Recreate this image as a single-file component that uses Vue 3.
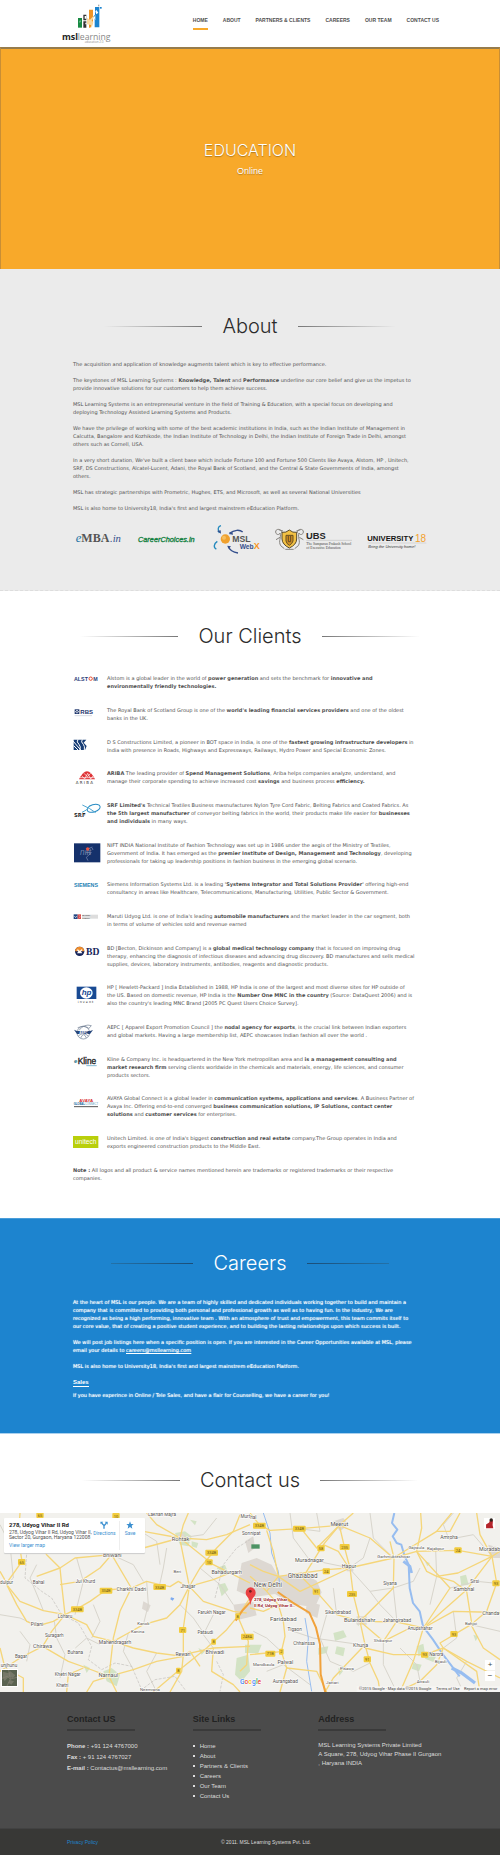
<script setup>
const navItems = ['HOME', 'ABOUT', 'PARTNERS & CLIENTS', 'CAREERS', 'OUR TEAM', 'CONTACT US']
const siteLinks = ['Home', 'About', 'Partners & Clients', 'Careers', 'Our Team', 'Contact Us']

// Text between double asterisks is emphasised.
const parts = (text) => text.split('**').map((t, i) => ({ t, strong: i % 2 === 1 }))

const about = [
  'The acquisition and application of knowledge augments talent which is key to effective performance.',
  'The keystones of MSL Learning Systems : **Knowledge, Talent** and **Performance** underline our core belief and give us the impetus to\nprovide innovative solutions for our customers to help them achieve success.',
  'MSL Learning Systems is an entrepreneurial venture in the field of Training & Education, with a special focus on developing and\ndeploying Technology Assisted Learning Systems and Products.',
  'We have the privilege of working with some of the best academic institutions in India, such as the Indian Institute of Management in\nCalcutta, Bangalore and Kozhikode, the Indian Institute of Technology in Delhi, the Indian Institute of Foreign Trade in Delhi, amongst\nothers such as Cornell, USA.',
  "In a very short duration, We've built a client base which include Fortune 100 and Fortune 500 Clients like Avaya, Alstom, HP , Unitech,\nSRF, DS Constructions, Alcatel-Lucent, Adani, the Royal Bank of Scotland, and the Central & State Governments of India, amongst\nothers.",
  'MSL has strategic partnerships with Prometric, Hughes, ETS, and Microsoft, as well as several National Universities',
  "MSL is also home to University18, India's first and largest mainstrem eEducation Platform.",
]

const clients = [
  { id: 'alstom', top: 45, text: 'Alstom is a global leader in the world of **power generation** and sets the benchmark for **innovative and\nenvironmentally friendly technologies.**' },
  { id: 'rbs', top: 140, text: "The Royal Bank of Scotland Group is one of the **world's leading financial services providers** and one of the oldest\nbanks in the UK." },
  { id: 'ds', top: 235, text: 'D S Constructions Limited, a pioneer in BOT space in India, is one of the **fastest growing infrastructure developers** in\nIndia with presence in Roads, Highways and Expressways, Railways, Hydro Power and Special Economic Zones.' },
  { id: 'ariba', top: 331, text: '**ARIBA** The leading provider of **Spend Management Solutions**, Ariba helps companies analyze, understand, and\nmanage their corporate spending to achieve increased cost **savings** and business process **efficiency.**' },
  { id: 'srf', top: 425, text: "**SRF Limited's** Technical Textiles Business masnufactures Nylon Tyre Cord Fabric, Belting Fabrics and Coated Fabrics. As\n**the 5th largest manufacturer** of conveyor belting fabrics in the world, their products make life easier for **businesses\nand individuals** in many ways." },
  { id: 'nift', top: 545, text: 'NIFT INDIA National Institute of Fashion Technology was set up in 1986 under the aegis of the Ministry of Textiles,\nGovernment of India. It has emerged as the **premier Institute of Design, Management and Technology**, developing\nprofessionals for taking up leadership positions in fashion business in the emerging global scenario.' },
  { id: 'siemens', top: 33, text: "Siemens Information Systems Ltd. is a leading **'Systems Integrator and Total Solutions Provider'** offering high-end\nconsultancy in areas like Healthcare, Telecommunications, Manufacturing, Utilities, Public Sector & Government." },
  { id: 'maruti', top: 129, text: "Maruti Udyog Ltd. is one of India's leading **automobile manufacturers** and the market leader in the car segment, both\nin terms of volume of vehicles sold and revenue earned" },
  { id: 'bd', top: 224, text: 'BD [Becton, Dickinson and Company] is a **global medical technology company** that is focused on improving drug\ntherapy, enhancing the diagnosis of infectious diseases and advancing drug discovery. BD manufactures and sells medical\nsupplies, devices, laboratory instruments, antibodies, reagents and diagnostic products.' },
  { id: 'hp', top: 343, text: "HP [ Hewlett-Packard ] India Established in 1988, HP India is one of the largest and most diverse sites for HP outside of\nthe US. Based on domestic revenue, HP India is the **Number One MNC in the country** (Source: DataQuest 2006) and is\nalso the country's leading MNC Brand [2005 PC Quest Users Choice Survey]." },
  { id: 'aepc', top: 462, text: 'AEPC [ Apparel Export Promotion Council ] the **nodal agency for exports**, is the crucial link between Indian exporters\nand global markets. Having a large membership list, AEPC showcases Indian fashion all over the world .' },
  { id: 'kline', top: 558, text: 'Kline & Company Inc. is headquartered in the New York metropolitan area and **is a management consulting and\nmarket research firm** serving clients worldwide in the chemicals and materials, energy, life sciences, and consumer\nproducts sectors.' },
  { id: 'avaya', top: 46, text: 'AVAYA Global Connect is a global leader in **communication systems, applications and services**. A Business Partner of\nAvaya Inc. Offering end-to-end converged **business communication solutions, IP Solutions, contact center\nsolutions** and **customer services** for enterprises.' },
  { id: 'unitech', top: 165, text: "Unitech Limited. is one of India's biggest **construction and real estate** company.The Group operates in India and\nexports engineered construction products to the Middle East." },
]

// Map labels: [text, centre x, baseline y, size]
const places = [
  ['Lakhan Majra', 486, 35, 14], ['Rohtak', 542, 109, 17], ['Bhiwani', 337, 156, 16], ['Beri', 532, 204, 13],
  ['Bahadurgarh', 680, 208, 16], ['dulpur', 20, 237, 14], ['Bahal', 116, 238, 14], ['Jui Khurd', 256, 236, 14],
  ['Charkhi Dadri', 394, 258, 15], ['Jhajjar', 564, 250, 15], ['Loharu', 195, 340, 14], ['Farukh Nagar', 635, 328, 14],
  ['Pilani', 111, 363, 15], ['Kanok', 430, 361, 13], ['Kanina', 413, 386, 13], ['Pataudi', 616, 389, 14],
  ['Suragarh', 163, 398, 14], ['Mahendragarh', 345, 417, 15], ['Chirawa', 128, 431, 16], ['Buhana', 226, 448, 14],
  ['Bagar', 63, 461, 14], ['Rewari', 549, 455, 15], ['Bhiwadi', 645, 447, 16], ['unjhunu', 27, 486, 14],
  ['Khetri Nagar', 203, 514, 14], ['Khetri', 187, 548, 14], ['Narnaul', 325, 518, 17], ['Neemrana', 450, 560, 13],
  ['Murt', 736, 41, 14], ['Son', 738, 92, 14], ['hal', 760, 42, 14], ['nipat', 766, 92, 14],
  ['Meerut', 1018, 65, 17], ['Muradnagar', 928, 171, 16], ['Hapur', 1047, 191, 16], ['Ghaziabad', 908, 220, 19],
  ['New Delhi', 804, 248, 19], ['Faridabad', 850, 349, 18], ['Tigaon', 884, 378, 14], ['Chhainssa', 912, 422, 14],
  ['Palwal', 856, 477, 16], ['Mandkaula', 791, 483, 13], ['Aurangabad', 856, 535, 14], ['Sikandrabad', 1014, 328, 14],
  ['Bulandshahr', 1079, 351, 17], ['Jahangirabad', 1191, 352, 14], ['Khurja', 1082, 427, 16], ['Shikarpur', 1149, 412, 13],
  ['Pisawa', 1041, 495, 13], ['Jattari', 997, 538, 13], ['Siyana', 1170, 240, 14], ['Garhmukteshwar', 1181, 161, 13],
  ['Gajraula', 1249, 133, 13], ['Rajabpur', 1307, 137, 13], ['Amroha', 1347, 104, 15], ['Moradab', 1469, 138, 16],
  ['Sirsi', 1424, 234, 14], ['Sambhal', 1392, 260, 16], ['Chanda', 1472, 330, 15], ['Bahjoi', 1413, 360, 13],
  ['Anupshahar', 1260, 376, 14], ['Narora', 1309, 454, 14], ['Bijauli', 1322, 476, 13], ['Atrauli', 1269, 534, 13],
]
const shields = [
  ['65', 120, 31], ['10', 348, 34], ['65', 65, 172], ['334B', 635, 144], ['10', 627, 173], ['334B', 318, 258],
  ['334B', 479, 247], ['334B', 232, 314], ['71', 548, 376], ['8', 641, 411], ['8', 535, 498], ['8', 713, 335],
  ['248A', 742, 396], ['334B', 778, 63], ['334B', 898, 72], ['58', 963, 131], ['235', 1034, 127], ['24', 979, 200],
  ['91', 949, 261], ['235', 1056, 268], ['91', 1102, 464], ['71B', 811, 447], ['2', 844, 441], ['24', 1374, 137],
  ['93', 1488, 236], ['93', 1362, 388], ['93', 1274, 450],
]
const roads = [
  'M0 200L20 235L66 170L55 100L60 25', 'M20 240L60 290L130 318L195 330L232 312L270 290L318 256L394 250L440 230L479 240L510 246L535 230L560 245',
  'M20 240L50 300L80 350L112 364L160 350L195 330L185 240L180 190L140 150L110 110', 'M195 330L155 380L128 425L60 460L15 490L0 500',
  'M0 430L15 490L70 520L70 562', 'M335 150L394 250L360 320L340 400L327 515', 'M110 215L180 190L225 160L335 150L430 130L540 100',
  'M335 150L300 190L240 230L180 240', 'M540 100L470 60L440 25', 'M540 100L550 60L565 25', 'M540 100L620 105L680 90L750 60', 'M430 80L540 100L640 180L700 210L750 235',
  'M540 105L555 180L568 245L550 370L550 450', 'M568 245L600 190L650 130L700 80L720 30', 'M568 245L640 225L690 205', 'M568 245L610 290L700 320L740 325',
  'M195 330L260 360L280 395L340 410L400 430L470 445L550 455', 'M340 410L385 385L430 360L500 340L540 300L568 245', 'M550 450L640 430L750 425', 'M550 450L545 500L510 562',
  'M327 515L400 495L470 470L550 455', 'M327 515L260 490L205 470L128 425', 'M327 515L350 562', 'M250 490L205 510L200 562', 'M327 515L280 530L260 562',
  'M640 430L635 500L700 540L720 562', 'M750 280L713 335L680 375L620 430L535 498L460 562', 'M713 335L745 410L740 480L720 500', 'M600 485L570 440L550 455',
  'M1018 62L898 72L810 77L778 60L750 25', 'M1018 62L1034 130L1050 190L1060 270L1080 350L1095 420L1110 475L1135 530L1140 562', 'M1018 62L970 120L920 200L908 220', 'M1018 62L1110 100L1180 160L1250 140L1374 137L1476 155',
  'M1018 62L990 90L950 130L910 80', 'M1018 62L1060 25', 'M800 77L820 140L835 215L800 260L835 300L850 350L855 395L844 441L860 490L840 562', 'M835 215L980 195L1047 190L1180 160L1310 80L1355 25', 'M1047 190L1015 140L970 120',
  'M908 220L949 261L1010 330L1080 350L1191 352L1270 370L1400 255L1476 155L1500 140', 'M1080 350L1150 410L1230 370L1270 370L1360 320L1440 322L1500 325', 'M1080 350L1180 250L1182 160L1170 110',
  'M1150 410L1190 350', 'M1476 155L1490 235L1460 320L1413 360L1320 415L1330 430L1400 470L1500 520', 'M1250 140L1265 70L1262 25', 'M1250 140L1280 200L1310 215L1360 230L1400 260L1415 355', 'M1270 370L1240 470L1200 562',
  'M1095 430L1180 450L1274 450L1330 430', 'M1330 430L1310 480L1260 530L1190 562', 'M1330 430L1430 500L1440 562', 'M1413 360L1450 430L1500 465', 'M1250 140L1350 250L1290 340L1270 370', 'M1050 190L900 260L835 215',
  'M800 260L780 240L750 215', 'M835 215L790 200L750 180', 'M835 300L790 320L750 310', 'M844 441L800 445L750 450', 'M860 490L950 500L980 562', 'M1095 420L1000 520L975 562', 'M1310 215L1374 205L1476 155', 'M1476 155L1440 90L1430 25', 'M1380 25L1350 80L1310 80',
]
const lanes = [
  'M0 60L30 120L40 220L20 240', 'M110 180L90 220L115 280L130 318', 'M230 160L250 230L225 330', 'M335 150L400 180L430 230', 'M440 230L445 300L430 360', 'M500 130L490 190L479 240', 'M600 190L660 240L700 300',
  'M280 300L300 350L275 400', 'M60 380L90 420L80 470', 'M163 350L170 400L195 450L180 520', 'M226 430L260 400L300 420', 'M385 385L370 440L400 495', 'M470 445L440 500L470 562', 'M613 388L580 340L540 300', 'M640 330L610 390L640 430',
  'M0 330L60 340L111 363', 'M390 60L470 110L480 180', 'M650 40L610 90L540 100', 'M870 25L880 100L928 165', 'M928 165L1050 190', 'M1110 100L1090 160L1047 190L1110 260L1180 250', 'M1180 250L1240 230L1260 190', 'M980 330L960 400L990 470L1060 500L1110 475',
  'M880 380L940 400L1082 420', 'M1150 410L1150 480L1190 562', 'M1191 352L1180 250', 'M1347 104L1330 60L1360 25', 'M1307 137L1310 215L1290 300', 'M1350 250L1430 230L1490 236', 'M1360 320L1370 400L1330 430', 'M1413 360L1500 380', 'M1200 430L1250 480L1260 530',
  'M800 500L850 480L930 540', 'M760 380L800 400L844 441', 'M1347 104L1420 90L1476 155', 'M1000 250L1010 330', 'M950 25L960 80L898 72', 'M1110 25L1120 100L1180 160', 'M1400 470L1370 520L1390 562', 'M1110 260L1140 300L1191 352',
]
</script>

<template>
  <div class="page">
    <header class="header">
      <a href="#home" class="logo" aria-label="MSL Learning">
        <svg viewBox="180 10 156 123" width="52" height="41">
          <rect x="231" y="55" width="12" height="29" fill="#188a43" />
          <path d="M234 64l6-2v4l-5 4z" fill="#5fb583" />
          <path d="M247 45h9v17h-9zM247 65h9v19h-9z" fill="#333" />
          <path d="M251 49h5v8h-5zM253 69h4v5h-4z" fill="#fff" />
          <path d="M264 30h12v40l-8 14h-4z" fill="#f29423" />
          <path d="M258 55l9 5 10-11 6-2-11 16 5 4-5 18-2-9-12-2z" fill="#f8d8a0" />
          <path d="M282 22h13v61h-14V61l-3-11 4-5z" fill="#1d84cf" />
          <path d="M283 35l3-4 6 8-6 5zM278 54l5-8v16z" fill="#fff" />
          <rect x="291" y="15" width="4" height="5" fill="#aaa" /><rect x="297" y="22" width="5" height="5" fill="#1d84cf" />
          <text x="183" y="121" font-size="27" font-weight="700" fill="#242424">msl</text>
          <text x="230" y="121" font-size="26" fill="#888">learning</text>
          <text x="251" y="129" font-size="9" fill="#888">education 2.0</text>
        </svg>
      </a>
      <nav class="nav">
        <a v-for="(n, i) in navItems" :key="n" href="#" :class="{ active: i === 0 }">{{ n }}</a>
      </nav>
    </header>

    <section class="hero">
      <h1>EDUCATION</h1>
      <p>Online</p>
    </section>

    <section class="about">
      <h2 class="title"><span>About</span></h2>
      <p v-for="(a, i) in about" :key="i" class="copy">
        <template v-for="(s, j) in parts(a)" :key="j"><strong v-if="s.strong">{{ s.t }}</strong><template v-else>{{ s.t }}</template></template>
      </p>
      <div class="partners">
        <svg viewBox="75 70 141 96" width="47" height="32" class="serif">
          <text x="77" y="126" font-size="38" font-style="italic" fill="#2374a5">e</text>
          <text x="94" y="126" font-size="36" font-weight="700" fill="#555">MBA</text>
          <text x="180" y="127" font-size="32" font-style="italic" fill="#34508c">.in</text>
        </svg>
        <svg viewBox="255 70 180 96" width="60" height="32">
          <text x="258" y="127" font-size="22" font-style="italic" fill="#12803e" stroke="#12803e">CareerChoices.in</text>
        </svg>
        <svg viewBox="485 70 144 96" width="48" height="32">
          <g fill="none" stroke="#2489bd" stroke-width="4">
            <path d="M512 78c-9 2-11 10-5 22" /><path d="M577 97c-9-8-25-7-40 4" stroke="#344f8c" /><path d="M501 125c-11 7-12 20-3 23" /><path d="M533 140c4 10 15 18 30 20" stroke="#344f8c" />
          </g>
          <path d="M500 94l12 8-1-10zM535 103l11-7 2 9zM531 138l11 2-6 7z" fill="#344f8c" />
          <circle cx="525" cy="118" r="14" fill="#efa02e" /><circle cx="521" cy="114" r="6" fill="#f6bf60" />
          <text x="546" y="127" font-size="26" font-weight="700" fill="#555">MSL</text>
          <text x="568" y="147" font-size="20" font-weight="700" fill="#344f8c">Web</text>
          <text x="610" y="147" font-size="27" font-weight="700" fill="#f7941d">X</text>
        </svg>
        <svg viewBox="670 70 234 96" width="78" height="32">
          <g fill="none" stroke="#85827d" stroke-width="3">
            <path d="M694 100c-3-15-20-13-19-3s12 9 13 3c5 14-6 24 2 38l11 9" /><path d="M739 100c3-15 20-13 19-3s-12 9-13 3c-5 14 6 24-2 38l-11 9" />
            <path d="M697 94l-13-4M737 94l13-4M688 113l-12 7M746 113l12 7M704 149h25" />
          </g>
          <path d="M694 98q12 2 22-7 10 9 22 7v20q0 17-22 27-21-10-22-27z" fill="#f2c144" stroke="#594b2b" stroke-width="3" />
          <path d="M706 107h21v17q-2 8-11 13-8-4-10-13z" fill="#d28f22" stroke="#644e21" stroke-width="3" /><path d="M713 109v17h7v-17" fill="none" stroke="#684d21" stroke-width="3" />
          <text x="766" y="117" font-size="28" font-weight="700" fill="#242424">UBS</text>
          <path d="M767 122h137" stroke="#999" stroke-width="1" />
          <g class="serif" font-size="11" fill="#444"><text x="767" y="135">The Sampuran Prakash School</text><text x="767" y="148">of Executive Education</text></g>
        </svg>
        <svg viewBox="950 70 180 96" width="60" height="32">
          <text x="951" y="125" font-size="23" font-weight="700" fill="#151515">UNIVERSITY</text>
          <text x="1094" y="126" font-size="30" fill="#f3a12d">18</text>
          <path d="M952 130h176" stroke="#aaa" stroke-width="1" />
          <text x="954" y="145" font-size="12" font-style="italic" fill="#333">Bring the University home!</text>
        </svg>
      </div>
    </section>

    <section class="clients">
      <h2 class="title"><span>Our Clients</span></h2>
      <ul class="client-list">
        <li v-for="c in clients" :key="c.id" class="client">
          <svg :viewBox="`70 ${c.top} 84 48`" width="28" height="16" class="client-logo">
            <g v-if="c.id === 'alstom'" font-weight="700" font-size="16">
              <text x="73" y="65" fill="#293d78">ALST</text><circle cx="123" cy="59" r="5" fill="none" stroke="#e34a31" stroke-width="3" /><text x="131" y="65" fill="#293d78">M</text>
            </g>
            <g v-else-if="c.id === 'rbs'" fill="#1c346b">
              <rect x="75" y="150" width="14" height="14" /><path d="M80 152h4v3h3v4h-3v3h-4v-3h-3v-4h3z" fill="#fff" /><rect x="80" y="155" width="4" height="4" />
              <text x="92" y="164" font-size="18" font-weight="700">RBS</text><path d="M75 169h52" stroke="#8490a8" />
            </g>
            <g v-else-if="c.id === 'ds'">
              <path d="M72 240h38l-8 9 9 10-5 12H72z" fill="#173d76" /><path d="M70 244l24 28M85 239q-6 8 3 15 6 6 3 17M98 239q-6 8 3 15 5 6 3 17M72 258l14 14" fill="none" stroke="#fff" stroke-width="3" />
            </g>
            <g v-else-if="c.id === 'ariba'">
              <path d="M88 362q24-48 48 0z" fill="#df3337" /><path d="M96 351l9 10 9-17 9 17 8-10M103 344l10 10 10-10M91 357h42" fill="none" stroke="#fff" stroke-width="2" />
              <text x="78" y="377" font-size="12" fill="#333" class="wide">A R I B A</text>
            </g>
            <g v-else-if="c.id === 'srf'">
              <ellipse cx="132" cy="447" rx="20" ry="11" transform="rotate(-17 132 447)" fill="none" stroke="#268bc4" stroke-width="3" /><path d="M98 437q22 9 40 23M97 459q15-4 24-21" fill="none" stroke="#50a6d1" stroke-width="3" />
              <text x="73" y="473" font-size="16" font-weight="700" fill="#222" class="wide">SRF</text><path d="M73 467h46" stroke="#fff" />
            </g>
            <g v-else-if="c.id === 'nift'">
              <rect x="73" y="552" width="79" height="57" fill="#15316b" /><text x="91" y="586" font-size="25" font-style="italic" fill="#7185ab">nift</text>
              <path d="M112 570l16-7M108 579l17 1-15 14 5 10M127 565l3 7" fill="none" stroke="#8493b5" stroke-width="2" /><circle cx="114" cy="569" r="5" fill="#e95443" />
            </g>
            <text v-else-if="c.id === 'siemens'" x="73" y="54" font-size="16" font-weight="700" fill="#2381b3">SIEMENS</text>
            <g v-else-if="c.id === 'maruti'">
              <rect x="72" y="136" width="12" height="14" fill="#214682" /><path d="M74 141l4 5 4-5" stroke="#fff" stroke-width="2" fill="none" /><rect x="84" y="136" width="10" height="14" fill="#d84c4b" /><path d="M87 138l5 5-5 5" fill="none" stroke="#fff" />
              <rect x="97" y="137" width="48" height="12" fill="#ddd" /><g font-size="6" font-weight="700" fill="#555"><text x="98" y="142">MARUTI</text><text x="98" y="149">SUZUKI</text></g>
            </g>
            <g v-else-if="c.id === 'bd'">
              <circle cx="90" cy="246" r="14" fill="#17255b" /><path d="M76 246a14 14 0 0 1 28 0z" fill="#ef8d2c" /><path d="M81 242q9-6 18 0l-5 4 4 6H82l4-6z" fill="#fff" /><circle cx="90" cy="240" r="4" fill="#ef8d2c" />
              <text x="109" y="257" font-size="29" font-weight="700" fill="#17255b" class="serif">BD</text>
            </g>
            <g v-else-if="c.id === 'hp'">
              <rect x="81" y="354" width="59" height="37" fill="#184a93" /><ellipse cx="110" cy="373" rx="19" ry="17" fill="#fff" /><text x="96" y="380" font-size="24" font-weight="700" font-style="italic" fill="#184a93">hp</text>
              <text x="84" y="404" font-size="10" fill="#222" class="wide">i n v e n t</text>
            </g>
            <g v-else-if="c.id === 'aepc'" fill="none" stroke="#6c7b91" stroke-width="2">
              <circle cx="101" cy="491" r="19" /><path d="M88 484q16-21 37-14l-9 10M86 501q14-14 30 0M93 507q9-20 17 0M84 476q16-9 32 0" /><path d="M73 482l9 4h39l9-3-9 12H82z" fill="#26467b" stroke="none" /><text x="89" y="494" font-size="9" font-weight="700" fill="#fff" stroke="none">AEPC</text>
            </g>
            <g v-else-if="c.id === 'kline'">
              <text x="73" y="583" font-size="18" font-weight="700" fill="#24748b">e</text><text x="84" y="586" font-size="25" fill="#222" stroke="#222">Kline</text><path d="M110 590h31" stroke="#82b9d4" stroke-width="3" />
            </g>
            <g v-else-if="c.id === 'avaya'">
              <text x="89" y="70" font-size="13" font-weight="700" fill="#d82d2e">AVAYA</text><text x="72" y="80" font-size="8" font-weight="700" fill="#0e5c98">GLOBAL<tspan fill="#5799b9" font-weight="400">CONNECT</tspan></text><path d="M73 84h72" stroke="#555" stroke-width="3" />
            </g>
            <g v-else>
              <rect x="70" y="171" width="76" height="36" fill="#b9cf0b" /><text x="76" y="194" font-size="20" fill="#fff">unitech</text>
            </g>
          </svg>
          <p class="copy">
            <template v-for="(s, j) in parts(c.text)" :key="j"><strong v-if="s.strong">{{ s.t }}</strong><template v-else>{{ s.t }}</template></template>
          </p>
        </li>
      </ul>
      <p class="copy"><strong>Note :</strong> All logos and all product &amp; service names mentioned herein are trademarks or registered trademarks or their respective<br>companies.</p>
    </section>

    <section class="careers">
      <h2 class="title"><span>Careers</span></h2>
      <p class="copy">At the heart of MSL is our people. We are a team of highly skilled and dedicated individuals working together to build and maintain a<br>company that is committed to providing both personal and professional growth as well as to having fun. In the industry, We are<br>recognized as being a high performing, innovative team . With an atmosphere of trust and empowerment, this team commits itself to<br>our core value, that of creating a positive student experience, and to building the lasting relationships upon which success is built.</p>
      <p class="copy">We will post job listings here when a specific position is open. If you are interested in the Career Opportunities available at MSL, please<br>email your details to <a href="mailto:careers@msllearning.com">careers@msllearning.com</a></p>
      <p class="copy">MSL is also home to University18, India's first and largest mainstrem eEducation Platform.</p>
      <h3>Sales</h3>
      <p class="copy">If you have experince in Online / Tele Sales, and have a flair for Counselling, we have a career for you!</p>
    </section>

    <section class="contact">
      <h2 class="title"><span>Contact us</span></h2>
      <div class="map">
        <svg class="map-art" viewBox="0 25 1500 537" preserveAspectRatio="xMidYMid slice" role="img" aria-label="Map of New Delhi region">
          <rect y="25" width="1500" height="537" fill="#f2f1ed" />
          <g fill="#d3e3c5">
            <path d="M525 85l30-5 20 15-10 30-25-5zM575 110l20 5-5 15-15-5zM650 190l25-10 10 25-20 8zM655 240l20-5 10 20-20 20zM310 500l25-10 25 20-10 35-30-15zM250 480l20 10-10 15zM710 460l35-10 5 50-25 30-20-20zM735 420l50 0-10 25-40 0zM595 430l20 10-10 10zM570 45l20 5-5 12z" />
            <path d="M1000 385l30-8 10 20-35 12zM1010 425l25 5-5 25-25-8zM955 430l30-5-5 20-25 5zM1060 340l25 5-10 20zM1250 425l20-8 5 30-20 8zM1285 440l25 12-10 20-25-10zM1380 215l18-5 8 30-22 3zM1240 475l25 5-8 20-22-8zM1015 490l15 8-12 15zM1275 170l15 5-8 10zM1420 390l15 5-8 15z" />
          </g>
          <g fill="#ddd8d2">
            <path d="M725 175l45-15 45 20 20 35 70-12 45 25 15 35-20 45-70-10-50-30-70 10-45-20zM735 110l25-15 5 35-20 15zM1000 50l30-10 15 20-25 20zM1040 180h20v20h-20zM700 300l60-8 10 40-60 15zM430 290l22 12-8 20-18-10zM1465 120l35 10v30h-30zM1070 335h30v25h-30zM920 290l40 10-8 40-35-15zM535 88h18v20h-18z" />
          </g>
          <g fill="none" stroke="#d8d5cc" stroke-width="3"><path v-for="l in lanes" :key="l" :d="l" /></g>
          <path d="M60 75l20 70-5 75 50 40 30 20 30 50 50 25 40 70-10 40 40 30 40-20 50 10 30 70 40-30 60-10 30 40M645 280l10-40 15-60 40-50 40-25M650 470l20 40-10 50" fill="none" stroke="#c3c0bb" stroke-width="2" stroke-dasharray="9 4" />
          <g fill="none" stroke="#97bdf0" stroke-linejoin="round">
            <path d="M1183 25l-7 30 16 20-14 20 12 20 14 5 10 35 12 25 3 70 10 45 20 25 10 45 30 40 30 45 50 65" stroke-width="6" />
            <path d="M1355 490l30 15 40 30" stroke-width="10" /><path d="M1210 170l20 15 5 20" stroke-width="8" />
            <path d="M790 25l20 60 5 60 20 55 5 50M915 340l10 60-5 70 15 90" stroke-width="3" />
          </g>
          <g fill="none" stroke="#f5d67a" stroke-width="4" stroke-linejoin="round"><path v-for="r in roads" :key="r" :d="r" /></g>
          <path d="M833 262l45 32 50 30 20 45 12 50 2 90 14 54M750 293l-23 25-20 30" fill="none" stroke="#f1a23b" stroke-width="6" />
          <path d="M513 278l10 3-5 7-7-4z" fill="#7caaf0" /><path d="M754 119h25v13h-25z" fill="#4d9363" />
          <g v-for="(s, i) in shields" :key="'s' + i">
            <rect :x="s[1] - s[0].length * 4 - 3" :y="s[2] - 9" :width="s[0].length * 8 + 6" height="18" rx="3" fill="#f2cc3e" />
            <text :x="s[1]" :y="s[2] + 5" font-size="12" text-anchor="middle" fill="#6b5715">{{ s[0] }}</text>
          </g>
          <g fill="#55524e" stroke="#fff" stroke-width="3" paint-order="stroke" text-anchor="middle">
            <text v-for="p in places" :key="p[0]" :x="p[1]" :y="p[2]" :font-size="p[3]">{{ p[0] }}</text>
          </g>
          <path d="M751 302q-2-18-9-26a15 16 0 1 1 20 0q-8 8-11 26z" fill="#ea4143" /><circle cx="751" cy="260" r="4" fill="#702020" />
          <g font-size="13" font-weight="700" fill="#9d2a2b" stroke="#fff" stroke-width="3" paint-order="stroke"><text x="762" y="290">278, Udyog Vihar</text><text x="762" y="306">II Rd, Udyog Vihar II..</text></g>
          <g font-size="20" font-weight="500" stroke="#fff" stroke-width="3" paint-order="stroke"><text x="720" y="538"><tspan fill="#4285f4">G</tspan><tspan fill="#ea4335">o</tspan><tspan fill="#fbbc05">o</tspan><tspan fill="#4285f4">g</tspan><tspan fill="#34a853">l</tspan><tspan fill="#ea4335">e</tspan></text></g>
          <rect x="1070" y="545" width="430" height="17" fill="#f6f5f3" />
          <g font-size="12" fill="#444"><text x="1077" y="557">©2015 Google · Map data ©2015 Google</text><text x="1308" y="557">Terms of Use</text><text x="1392" y="557">Report a map error</text></g>
        </svg>
        <div class="map-card">
          <div class="place">
            <strong>278, Udyog Vihar II Rd</strong>
            <span>278, Udyog Vihar II Rd, Udyog Vihar II,<br>Sector 20, Gurgaon, Haryana 122008</span>
            <a href="#map">View larger map</a>
          </div>
          <a href="#directions" class="action"><svg viewBox="0 0 24 24" width="8" height="8"><path d="M12 23V14L5 6M12 14l7-7" fill="none" stroke="#3a8fd0" stroke-width="4" /><path d="M1 2h9l-8 8zM14 2h9v9z" fill="#3a8fd0" /></svg>Directions</a>
          <a href="#save" class="action save"><svg viewBox="0 0 24 24" width="8" height="8"><path d="M12 1l3 8h8l-6 5 2 9-7-5-7 5 2-9-6-5h8z" fill="#3a8fd0" /></svg>Save</a>
        </div>
        <button class="satellite" aria-label="Satellite view"><svg viewBox="0 0 45 48" width="15" height="16"><rect width="45" height="48" fill="#59624f" /><path d="M3 5l15 4 7-5 15 12-7 8-13-3-12 12-5-8zM24 30l12 4-8 10-9-6z" fill="#767868" /><path d="M0 25l15-6 10 8 20-5M20 0l5 27-10 21" fill="none" stroke="#8a8477" stroke-width="2" /></svg></button>
        <button class="profile" aria-label="Account"><svg viewBox="0 0 32 32" width="11" height="11"><path d="M6 30V19l9-6 3-9 8 3-1 13 2 10z" fill="#b5252c" /><circle cx="21" cy="6" r="5" fill="#30251f" /></svg></button>
        <div class="zoom"><button aria-label="Zoom in">+</button><button aria-label="Zoom out">−</button></div>
      </div>
    </section>

    <footer>
      <div class="footer-main">
        <div class="col">
          <h4>Contact US</h4>
          <p><b>Phone :</b> +91 124 4767000</p>
          <p><b>Fax :</b> + 91 124 4767027</p>
          <p><b>E-mail :</b> Contactus@msllearning.com</p>
        </div>
        <div class="col">
          <h4>Site Links</h4>
          <ul><li v-for="l in siteLinks" :key="l"><a href="#">{{ l }}</a></li></ul>
        </div>
        <div class="col">
          <h4>Address</h4>
          <address>MSL Learning Systems Private Limited<br>A Square, 278, Udyog Vihar Phase II Gurgaon<br>, Haryana INDIA</address>
        </div>
      </div>
      <div class="footer-bar">
        <a href="#privacy">Privacy Policy</a>
        <span>© 2011. MSL Learning Systems Pvt. Ltd.</span>
      </div>
    </footer>
  </div>
</template>

<style>
body { margin: 0; }
</style>

<style scoped>
.page { font-family: "Liberation Sans", Arial, sans-serif; color: #505050; background: #fff; font-size: 5px; }
.page svg { display: block; }
h1, h2, h3, h4, p, ul { margin: 0; padding: 0; }
a { color: inherit; text-decoration: none; }
button { border: 0; padding: 0; cursor: pointer; }
.serif { font-family: "Liberation Serif", serif; }
.wide { font-family: "DejaVu Sans", sans-serif; }

.header { display: flex; justify-content: space-between; align-items: flex-start; height: 47px; padding: 0 61px; box-sizing: border-box; }
.logo { margin-top: 3px; font-family: "Open Sans", sans-serif; }
.nav { display: flex; gap: 15px; padding-top: 16px; font-weight: 700; line-height: 9px; }
.nav a { padding-bottom: 3px; border-bottom: 2px solid transparent; white-space: nowrap; }
.nav .active { border-color: #f8a92a; }

.hero { display: flex; flex-direction: column; align-items: center; box-sizing: border-box; height: 222px; padding-top: 91px; border: 1px solid #c88e35; border-top: 2px solid #967c4c; border-bottom: 0; background: #f8a92a; color: #fff; text-shadow: 0 1px 1px #b07a20; }
.hero h1 { font-family: Inter, sans-serif; font-size: 16px; line-height: 20px; font-weight: 300; }
.hero p { margin-top: 6px; font-size: 9px; line-height: 10px; }

.about, .clients, .careers { padding-left: 73px; padding-right: 73px; }
.title { display: flex; justify-content: center; align-items: center; gap: 20px; font-family: Inter, sans-serif; font-size: 20px; line-height: 28px; font-weight: 300; color: #2b2b2b; }
.title::before, .title::after { content: ""; width: 98px; height: 1px; background: linear-gradient(to left, #777, transparent); }
.title::after { background: linear-gradient(to right, #777, transparent); }
.copy { font-family: "DejaVu Sans", Verdana, sans-serif; font-size: 5px; line-height: 8px; white-space: pre-line; }

.about { padding-top: 43px; padding-bottom: 35px; background: #ebebeb; border-bottom: 1px dashed #ddd; }
.about .title { margin-bottom: 20px; }
.about .copy + .copy { margin-top: 8px; }
.partners { display: flex; justify-content: space-between; margin-top: 11px; padding-left: 2px; }

.clients { padding-top: 31px; padding-bottom: 36px; }
.client-list { list-style: none; margin-top: 24px; }
.client { display: grid; grid-template-columns: 28px 1fr; gap: 6px; margin-bottom: 16px; }
.client:nth-child(3n) { margin-bottom: 15px; }
.client-logo { overflow: visible; }

.careers { padding-top: 30px; padding-bottom: 34px; background: #1d84cf; border-top: 1px solid #4a9dd9; border-bottom: 1px solid #a9d0ee; color: #fff; }
.careers .title { margin-bottom: 21px; color: #fff; }
.careers .title::before, .careers .title::after { width: 82px; background: linear-gradient(to left, #1b4e78, #2371a8); }
.careers .title::after { background: linear-gradient(to right, #1b4e78, #2371a8); }
.careers .copy { text-shadow: 0 0 1px #fff; margin-bottom: 8px; }
.careers .copy a { text-decoration: underline; }
.careers h3 { width: fit-content; border-bottom: 1px solid #fff; font-size: 6px; line-height: 8px; margin-bottom: 4px; }
.careers .copy:last-child { margin-bottom: 0; }

.contact { padding-top: 32px; }
.contact .title { margin-bottom: 19px; }
.map { position: relative; height: 179px; overflow: hidden; font-family: Roboto, sans-serif; }
.map-art { width: 100%; height: 100%; }
.map-card { position: absolute; left: 4px; top: 5px; display: flex; box-sizing: border-box; width: 141px; height: 35px; padding: 3px 5px; border-radius: 1px; background: #fff; box-shadow: 0 1px 1px #ccc; }
.place { display: flex; flex-direction: column; width: 86px; line-height: 5px; white-space: nowrap; }
.place strong { font-size: 6px; line-height: 7px; color: #222; margin-bottom: 2px; }
.place a, .action { color: #3a8fd0; }
.place a { margin-top: 3px; }
.action { display: flex; flex-direction: column; align-items: center; width: 22px; line-height: 8px; }
.action.save { margin-left: 4px; border-left: 1px solid #eee; width: 20px; }
.satellite { position: absolute; left: 1px; bottom: 5px; border: 1px solid #fff; }
.profile { position: absolute; right: 5px; top: 5px; background: #fff; }
.zoom { position: absolute; right: 5px; bottom: 11px; display: flex; flex-direction: column; gap: 1px; }
.zoom button { width: 10px; height: 10px; background: #fff; color: #444; font-size: 8px; line-height: 10px; }

footer { background: #4b4b4b; color: #ddd; }
.footer-main { display: grid; grid-template-columns: repeat(3, 1fr); padding: 22px 56px 27px 67px; }
.col { font-size: 6px; }
.col h4 { width: 68px; padding-bottom: 4px; margin-bottom: 10px; border-bottom: 2px solid #3a3a3a; color: #222; font-size: 9px; line-height: 11px; }
.col p { line-height: 11px; white-space: nowrap; }
.col ul { list-style: none; }
.col li { display: flex; align-items: center; gap: 5px; line-height: 10px; }
.col li::before { content: ""; width: 2px; height: 2px; background: #ddd; }
.col address { font-style: normal; line-height: 9px; white-space: nowrap; }
.footer-bar { display: grid; grid-template-columns: 154px 1fr; padding: 9px 67px; border-top: 1px solid #424242; background: #383836; line-height: 8px; }
.footer-bar a { color: #1d84cf; }
</style>
